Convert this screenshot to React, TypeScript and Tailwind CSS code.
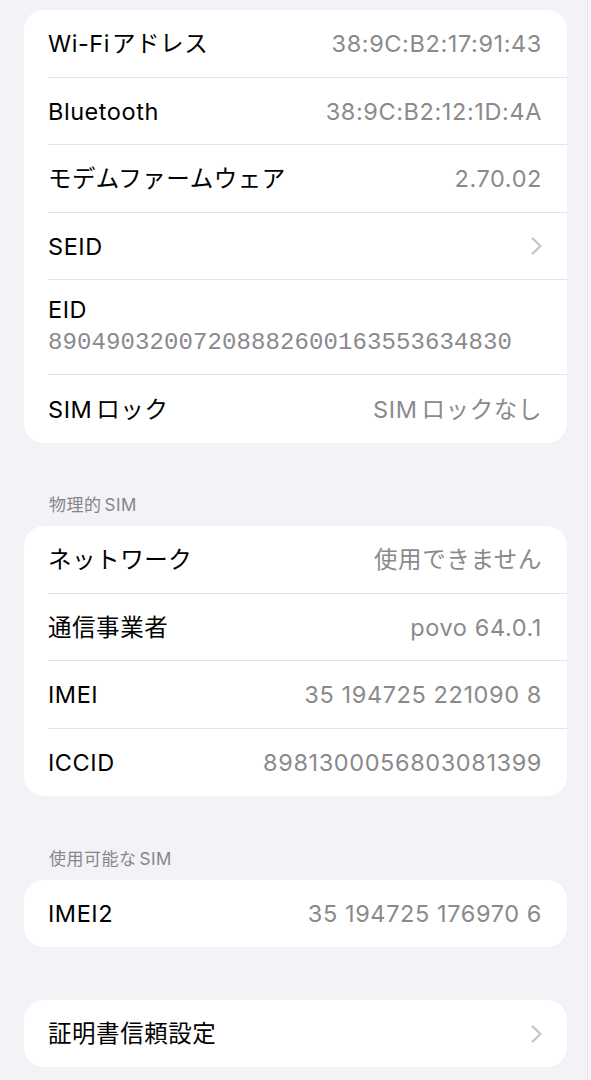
import React from "react";

const FONT = 'Inter, "Noto Sans CJK JP", "Noto Sans", sans-serif';

function Chevron() {
  return (
    <svg width="11" height="18" viewBox="0 0 11 18" fill="none" className="block">
      <path d="M1.6 1.4 L9.4 9 L1.6 16.6" stroke="#c4c4c8" strokeWidth="2.2" strokeLinecap="round" strokeLinejoin="round" />
    </svg>
  );
}

type RowProps = { label: React.ReactNode; value?: React.ReactNode; chevron?: boolean; last?: boolean };

function Row({ label, value, chevron, last }: RowProps) {
  return (
    <div className="ml-[24px]">
      <div
        className={
          "h-[67.5px] flex items-center justify-between pr-[25px] pt-[1px] " +
          (last ? "" : "border-b border-[#e3e3e7]")
        }
      >
        <span className="text-[23.5px] tracking-[0.55px] text-black leading-none">{label}</span>
        {value && <span className="text-[23.5px] tracking-[0.6px] text-[#8a8a8e] leading-none">{value}</span>}
        {chevron && <Chevron />}
      </div>
    </div>
  );
}

function Card({ children }: { children: React.ReactNode }) {
  return <div className="bg-white rounded-[20px] overflow-hidden">{children}</div>;
}

function Header({ text, latin }: { text: string; latin: string }) {
  return (
    <div className="h-[83.5px] flex items-end pb-[11px] pl-[25px]">
      <span className="text-[17px] tracking-[0.5px] leading-[20px] text-[#86868b]">
        {text}
        <span className="ml-[3px]">{latin}</span>
      </span>
    </div>
  );
}

export default function App() {
  return (
    <div className="w-[591px] min-h-[1080px] bg-[#f2f2f7] flex" style={{ fontFamily: FONT }}>
      <div className="w-[587px] pl-[24px] pr-[20px] pt-[10px]">
        <Card>
          <Row label={<>Wi-Fi<span className="ml-[2px]">アドレス</span></>} value="38:9C:B2:17:91:43" />
          <Row label="Bluetooth" value="38:9C:B2:12:1D:4A" />
          <Row label="モデムファームウェア" value="2.70.02" />
          <Row label="SEID" chevron />
          <div className="ml-[24px]">
            <div className="h-[95px] border-b border-[#e3e3e7] pt-[16px] pr-[25px]">
              <div className="text-[23.5px] tracking-[0.55px] leading-[28px] text-black">EID</div>
              <div
                className="mt-[3px] text-[24px] tracking-[0.1px] leading-[32px] text-[#8a8a8e]"
                style={{ fontFamily: '"Liberation Mono", "DejaVu Sans Mono", monospace' }}
              >
                89049032007208882600163553634830
              </div>
            </div>
          </div>
          <Row
            label={<>SIM<span className="ml-[4px]">ロック</span></>}
            value={<>SIM<span className="ml-[4px]">ロックなし</span></>}
            last
          />
        </Card>

        <Header text="物理的" latin="SIM" />
        <Card>
          <Row label="ネットワーク" value="使用できません" />
          <Row label="通信事業者" value="povo 64.0.1" />
          <Row label="IMEI" value="35 194725 221090 8" />
          <Row label="ICCID" value="8981300056803081399" last />
        </Card>

        <Header text="使用可能な" latin="SIM" />
        <Card>
          <Row label="IMEI2" value="35 194725 176970 6" last />
        </Card>

        <div className="h-[52.5px]" />
        <Card>
          <Row label="証明書信頼設定" chevron last />
        </Card>
      </div>
      <div className="w-px bg-[#e4e4e9]" />
      <div className="flex-1 bg-[#f6f6fa]" />
    </div>
  );
}
